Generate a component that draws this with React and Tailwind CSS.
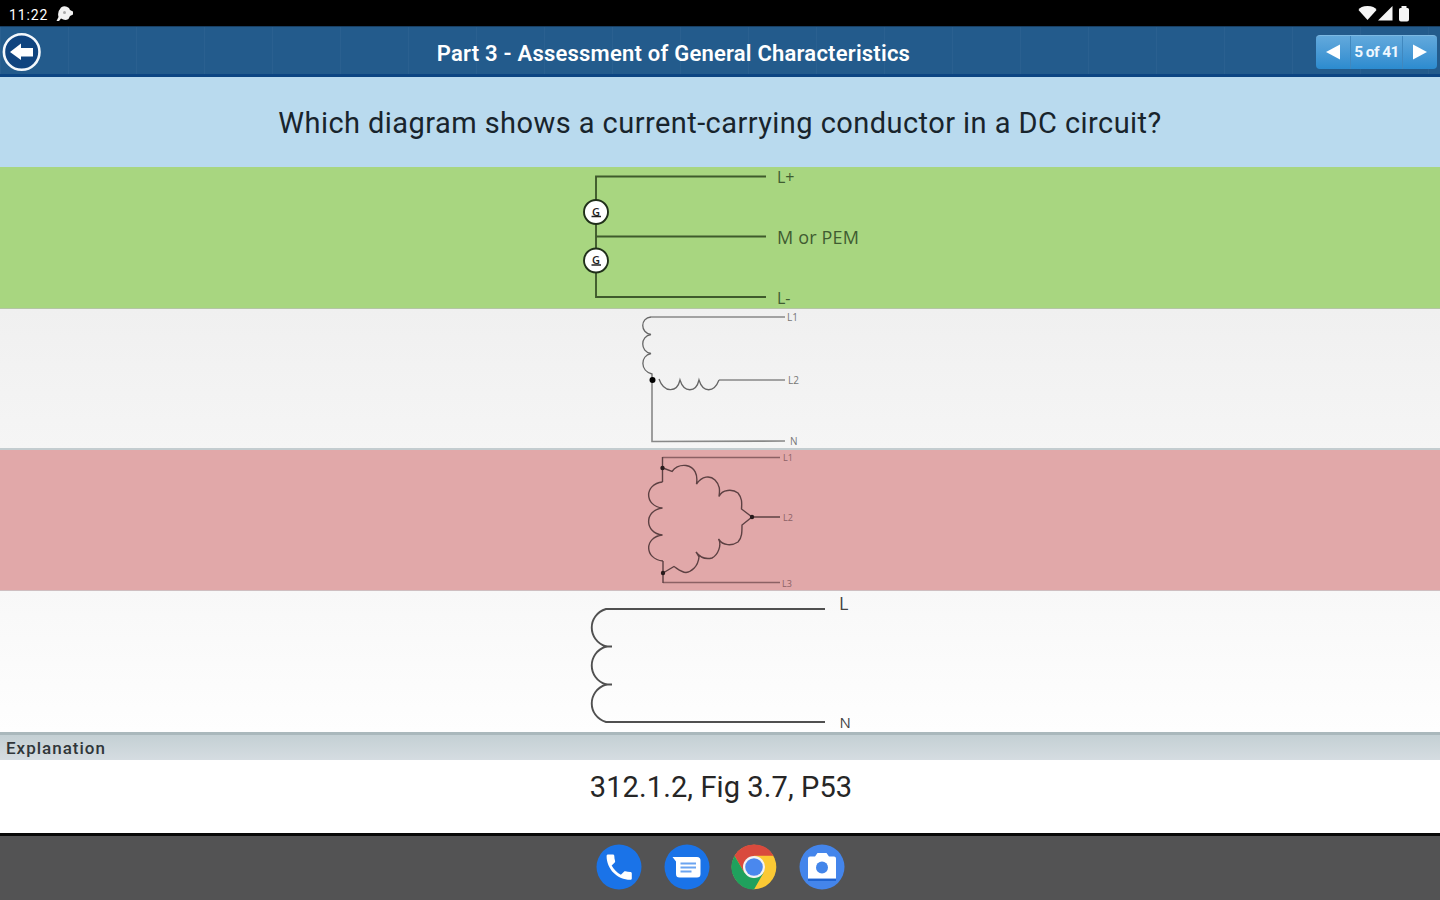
import React from "react";

const labelFont = "overflow-visible font-['Open_Sans','Noto_Sans',sans-serif]";

function StatusBar(){
    return (
        <div className="flex h-[26px] items-center justify-between bg-black pl-[9px] pr-[30px] text-white">
            <div className="flex items-center gap-[8px]">
                <span className="text-[14px] leading-none tracking-[0.9px] mt-[3px]">11:22</span>
                <svg width="18" height="16" viewBox="0 0 18 16" className="mt-[2px]">
                    <path d="M5 1.500Q9-1 13 2l1 2 3 1.500v3L14 10l-1.500 3Q9 15 5 12.500L3 15H0.500l2-4Q1 6 5 1.500z" fill="#f2f2f2"/>
                    <circle cx="8.500" cy="6.500" r="1.500" fill="#aaa"/>
                </svg>
            </div>
            <svg width="52" height="18" viewBox="1358 5 52 18" className="mt-[2px]">
                <g fill="#f5f5f5">
                    <path d="M1358.500 10q2-4 9-4t9 4l-9 10z"/>
                    <path d="M1378 20.500L1392.500 6v14.500z"/>
                    <path d="M1399 9.500q0-1.500 1.500-1.500h1V6h5v2h1q1.500 0 1.500 1.500v10q0 2-2 2h-6q-2 0-2-2z" />
                </g>
            </svg>
        </div>
    )
}

function Header(){
    return (
        <header className="flex h-[51px] items-center border-t border-[#183f63] border-b-[3px] border-b-[#0c4583] bg-[#235b8c] bg-[linear-gradient(90deg,rgba(255,255,255,0.03)_1px,transparent_1px)] bg-[length:68px_100%] text-white">
            <button className="w-[42px] pl-[2px] pt-[2px]">
                <svg width="40" height="40" viewBox="2 32 40 40">
                    <circle cx="21.700" cy="52" r="17.800" fill="#10447f" stroke="#f4f8fc" strokeWidth="2.600"/>
                    <path d="M10 52l11-8.500v4.500h12v8.500H21V60z" fill="#fff"/>
                </svg>
            </button>
            <h1 className="grow whitespace-nowrap pr-[11px] text-center text-[22px] leading-none font-semibold tracking-[0.220px] mt-[6px]">Part 3 - Assessment of General Characteristics</h1>
            <div className="mr-[3px] mt-[2px] flex h-[34px] w-[121px] items-stretch rounded-[4px] border-t border-[#7db9e3] bg-linear-to-b from-[#62a9dc] to-[#2b8bcf]">
                <button className="flex w-[35px] items-center justify-center border-r border-[#4088bf]">
                    <svg width="14" height="16" viewBox="0 0 14 16"><path d="M0 8L14 0.500v15z" fill="#fff"/></svg>
                </button>
                <span className="flex grow items-center justify-center whitespace-nowrap text-[15.500px] leading-none font-bold tracking-[-0.600px] text-[#eef7ff] pt-px">5 of 41</span>
                <button className="flex w-[35px] items-center justify-center border-l border-[#4088bf]">
                    <svg width="14" height="16" viewBox="0 0 14 16"><path d="M14 8L0 0.500v15z" fill="#fff"/></svg>
                </button>
            </div>
        </header>
    )
}

function Generator({y}){
    return (
        <g>
            <circle cx="596" cy={y} r="12" fill="#fff" stroke="#20301a" strokeWidth="1.900"/>
            <text x="596" y={y + 3.5} textAnchor="middle" fontSize="11" fontWeight="600" fill="#222">G</text>
            <path d={`M591.500 ${y + 4.500}h9.500`} stroke="#222" strokeWidth="1.500"/>
        </g>
    )
}

function DcDiagram(){
    return (
        <svg width="320" height="142" viewBox="560 167 320 142" className={labelFont}>
            <path d="M766 176.500H596V297h170M596 236.500h170" fill="none" stroke="#3f5a2c" strokeWidth="1.900"/>
            <Generator y={212} />
            <Generator y={260.5} />
            <g fill="#3f5c31">
                <text x="777" y="183" fontSize="16">L+</text>
                <text x="777" y="243.500" textLength="82" fontSize="18">M or PEM</text>
                <text x="777" y="303.500" fontSize="16">L-</text>
            </g>
        </svg>
    )
}

function TwoPhaseDiagram(){
    return (
        <svg width="320" height="141" viewBox="560 309 320 141" className={labelFont}>
            <g fill="none" stroke="#888" strokeWidth="1.600">
                <path d="M785 317H651M719 380h66M652 380v61.500l133-0.500"/>
                <path stroke="#666" strokeWidth="1.300" d="M651 317C640 318 640 333 651 334.500C640 336 640 352 651 353.500C640 356 640 371 652 374V380M659 379C664 393 677 393 680 380C684 393 696 393 699 380C703 393 714 393 719 380"/>
            </g>
            <circle cx="652.500" cy="380" r="3" fill="#000"/>
            <g fill="#777" fontSize="10">
                <text x="787" y="320.500">L1</text>
                <text x="788" y="384">L2</text>
                <text x="790" y="445">N</text>
            </g>
        </svg>
    )
}

function DeltaDiagram(){
    return (
        <svg width="320" height="141" viewBox="560 450 320 141" className={labelFont}>
            <g fill="none" stroke="#5d4143" strokeWidth="1.400">
                <path stroke="#8b6164" d="M662.500 457.500H780M663 582.500h117"/>
                <path d="M662.500 457v25M663 561v22M752 517h28"/>
                <path d="M662.500 482C644 484 644 506 662.500 508C644 510 644 533 662.500 535C644 537 644 559 663 561"/>
                <path d="M663 468l9 3.500C676 466 681 465 686 465.500C695 467 698 475 696.500 484C702 476 710 475 715 480C720 485 720 490 719 496.500C722 489 733 489 738 493C742 498 742 502 741.500 509L752 517L742 525C742 532 742 538 738 542C732 546 723 546 718.500 539C722 545 718 555 712 558C704 560 699 556 696 552L699 557C698 567 691 572 686 572.500C681 572 678 569 674 566.500L663 573"/>
            </g>
            <g fill="#281b1c">
                <circle cx="662.500" cy="468" r="2.200"/>
                <circle cx="752" cy="517" r="2.200"/>
                <circle cx="663" cy="573" r="2.200"/>
            </g>
            <g fill="#8b6164" fontSize="9">
                <text x="783" y="460.500">L1</text>
                <text x="783" y="521">L2</text>
                <text x="782" y="587">L3</text>
            </g>
        </svg>
    )
}

function SinglePhaseDiagram(){
    return (
        <svg width="320" height="141" viewBox="560 591 320 141" className={labelFont}>
            <g fill="none" stroke="#505050" strokeWidth="1.900">
                <path d="M825 609H606C587 615 587 640 606 646.500C587 653 587 678 606 684.500C587 691 587 716 606 722H825"/>
                <path d="M604 646.500h8M604 684.500h8"/>
            </g>
            <g fill="#444">
                <text x="839" y="610" fontSize="18">L</text>
                <text x="839.500" y="728" fontSize="15">N</text>
            </g>
        </svg>
    )
}

function Dock(){
    return (
        <nav className="flex h-[67px] items-center justify-center gap-[21.500px] border-t-[3px] border-[#080808] bg-[#535354] pb-[3px] pl-px">
            <svg width="46" height="46" viewBox="0 0 46 46">
                <circle cx="23" cy="23" r="22.500" fill="#1a73e8"/>
                <path transform="translate(6.400 6.400) scale(1.400)" fill="#fff" d="M20 15.500c-1.250 0-2.450-.2-3.570-.57-.35-.11-.74-.03-1.020.24l-2.200 2.200c-2.830-1.440-5.150-3.750-6.590-6.580l2.200-2.210c.28-.27.360-.66.250-1.010C8.700 6.450 8.500 5.250 8.500 4c0-.55-.45-1-1-1H4c-.55 0-1 .45-1 1 0 9.390 7.610 17 17 17 .55 0 1-.45 1-1v-3.500c0-.55-.45-1-1-1z"/>
            </svg>
            <svg width="46" height="46" viewBox="0 0 46 46">
                <circle cx="23" cy="23" r="22.500" fill="#1a73e8"/>
                <path d="M8.500 13H33q3.500 0 3.500 3.500V30q0 3.500-3.500 3.500H15.500Q12 33.500 12 30V17.500z" fill="#fff"/>
                <path d="M16.500 19.500h15.500M16.500 23.500h15.500M16.500 27.500h11" stroke="#6ba4f0" strokeWidth="2"/>
            </svg>
            <svg width="46" height="46" viewBox="0 0 46 46">
                <circle cx="23" cy="23" r="22.300" fill="#fbc934"/>
                <path d="M3.500 11.750A22.500 22.500 0 0 1 42.500 11.750H23L13.300 28.600z" fill="#d94a3d"/>
                <path d="M3.500 11.750A22.500 22.500 0 0 0 23 45.500L32.700 28.600L23 34.200L13.300 28.600z" fill="#1fa15d"/>
                <circle cx="23" cy="23" r="11" fill="#f3f3f3"/>
                <circle cx="23" cy="23" r="8.800" fill="#4a88ee"/>
            </svg>
            <svg width="46" height="46" viewBox="0 0 46 46">
                <circle cx="23" cy="23" r="22.500" fill="#4485eb"/>
                <path d="M9 34.500h28V37H9z" fill="#2063cf"/>
                <path d="M11 12.500h5l2.500-3.500h9l2.500 3.500h5q2 0 2 2V34.500H9V14.500q0-2 2-2z" fill="#fff"/>
                <circle cx="23" cy="23.500" r="6" fill="#4285ea"/>
            </svg>
        </nav>
    )
}

export default function App(){
    return (
        <div className="flex h-screen w-full flex-col overflow-hidden bg-white font-['Roboto',sans-serif]">
            <StatusBar />
            <Header />
            <div className="flex h-[90px] items-center justify-center bg-[#b9daee] pb-px">
                <h2 className="whitespace-nowrap text-[29px] leading-none tracking-[0.440px] text-[#18242c] mt-[4px]">Which diagram shows a current-carrying conductor in a DC circuit?</h2>
            </div>
            <div className="flex h-[142px] justify-center border-b border-[#b4c5a6] bg-[#a8d680]"><DcDiagram /></div>
            <div className="flex h-[141px] justify-center border-b-2 border-[#c3cccf] bg-linear-to-b from-[#f0f0f0] to-[#f5f5f5]"><TwoPhaseDiagram /></div>
            <div className="flex h-[141px] justify-center border-b border-[#cfbfc1] bg-[#e1a8a9]"><DeltaDiagram /></div>
            <div className="flex h-[141px] justify-center bg-linear-to-b from-[#f8f8f8] to-[#fefefe]"><SinglePhaseDiagram /></div>
            <div className="flex h-[28px] items-center border-t-[3px] border-[#aab8bc] bg-linear-to-b from-[#c4d0d4] to-[#d5dce1] pl-[6px]">
                <span className="text-[17px] leading-none font-medium tracking-[1px] text-[#303639] mt-px">Explanation</span>
            </div>
            <div className="flex h-[73px] justify-center pt-[13px] pl-[2px]">
                <p className="whitespace-nowrap text-[29px] leading-none tracking-[0.100px] text-[#262626]">312.1.2, Fig 3.7, P53</p>
            </div>
            <Dock />
        </div>
    )
}
